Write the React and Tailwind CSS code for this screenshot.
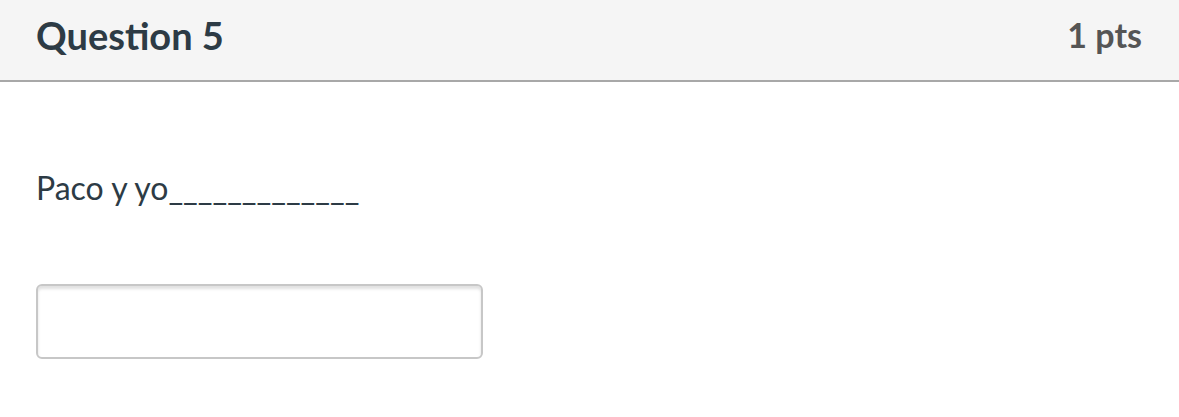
export default function App() {
  return (
    <div className="w-[1179px] h-[417px] bg-white" style={{ fontFamily: "Lato, 'Noto Sans', sans-serif" }}>
      <div className="h-[82px] bg-[#f5f5f5] border-b-2 border-[#a8a8a8] flex items-center justify-between pl-[36px] pr-[37px]">
        <div className="text-[38px] font-bold text-[#2d3b45] leading-none -mt-[10px]">Question 5</div>
        <div className="text-[34px] font-bold text-[#555555] leading-none -mt-[10px]">1 pts</div>
      </div>
      <div className="pl-[36px] pt-[90px]">
        <div className="text-[32px] text-[#2d3b45] leading-none">Paco y yo_____________</div>
        <div className="mt-[80px] w-[447px] h-[75px] border-2 border-[#c7c7c7] rounded-[6px] bg-white shadow-[inset_0_3px_3px_rgba(0,0,0,0.12)]"></div>
      </div>
    </div>
  );
}
